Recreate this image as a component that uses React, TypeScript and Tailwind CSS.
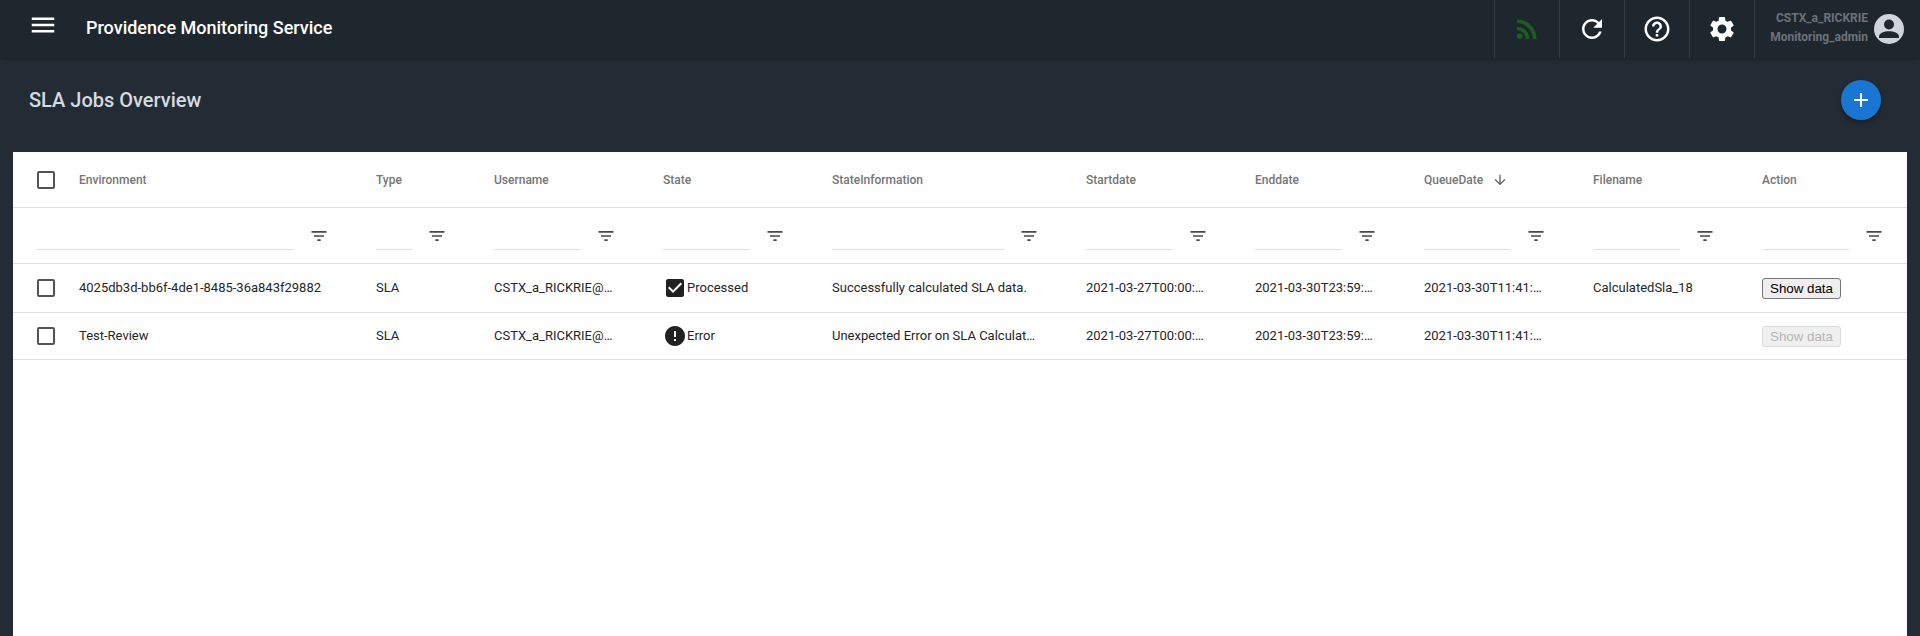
const font = { fontFamily: "Roboto, sans-serif" };

const rowGrid =
  "grid grid-cols-[66px_297px_118px_169px_169px_254px_169px_169px_169px_169px_1fr] items-center border-b border-[#e0e0e0]";

const columns = ["Environment", "Type", "Username", "State", "StateInformation", "Startdate", "Enddate", "QueueDate", "Filename", "Action"];

const filterWidths = ["w-[36px]", "w-[87px]", "w-[87px]", "w-[172px]", "w-[87px]", "w-[87px]", "w-[87px]", "w-[87px]", "w-[87px]"];

const rows = [
  {
    environment: "4025db3d-bb6f-4de1-8485-36a843f29882",
    state: "Processed",
    info: "Successfully calculated SLA data.",
    start: "2021-03-27T00:00:00Z",
    end: "2021-03-30T23:59:59Z",
    queue: "2021-03-30T11:41:20Z",
    file: "CalculatedSla_18",
    height: "h-[49px]",
  },
  {
    environment: "Test-Review",
    state: "Error",
    info: "Unexpected Error on SLA Calculation",
    start: "2021-03-27T00:00:00Z",
    end: "2021-03-30T23:59:59Z",
    queue: "2021-03-30T11:41:20Z",
    file: "",
    height: "h-[47px]",
  },
];

function Icon({ d, className }: { d: string; className: string }) {
  return (
    <svg viewBox="0 0 24 24" fill="currentColor" className={className}>
      <path d={d} />
    </svg>
  );
}

const paths = {
  menu: "M3 18h18v-2H3v2zm0-5h18v-2H3v2zm0-7v2h18V6H3z",
  filter: "M10 18h4v-2h-4v2zM3 6v2h18V6H3zm3 7h12v-2H6v2z",
  refresh:
    "M17.65 6.35C16.2 4.9 14.21 4 12 4c-4.42 0-7.99 3.58-7.99 8s3.57 8 7.99 8c3.73 0 6.84-2.55 7.73-6h-2.08c-.82 2.33-3.04 4-5.65 4-3.31 0-6-2.69-6-6s2.69-6 6-6c1.66 0 3.14.69 4.22 1.78L13 11h7V4l-2.35 2.35z",
  help:
    "M11 18h2v-2h-2v2zm1-16C6.48 2 2 6.48 2 12s4.48 10 10 10 10-4.48 10-10S17.52 2 12 2zm0 18c-4.41 0-8-3.59-8-8s3.59-8 8-8 8 3.59 8 8-3.59 8-8 8zm0-14c-2.21 0-4 1.79-4 4h2c0-1.1.9-2 2-2s2 .9 2 2c0 2-3 1.75-3 5h2c0-2.25 3-2.5 3-5 0-2.21-1.79-4-4-4z",
  settings:
    "M19.14 12.94c.04-.3.06-.61.06-.94 0-.32-.02-.64-.07-.94l2.03-1.58c.18-.14.23-.41.12-.61l-1.92-3.32c-.12-.22-.37-.29-.59-.22l-2.39.96c-.5-.38-1.03-.7-1.62-.94l-.36-2.54c-.04-.24-.24-.41-.48-.41h-3.84c-.24 0-.43.17-.47.41l-.36 2.54c-.59.24-1.13.57-1.62.94l-2.39-.96c-.22-.08-.47 0-.59.22L2.74 8.87c-.12.21-.08.47.12.61l2.03 1.58c-.05.3-.09.63-.09.94s.02.64.07.94l-2.03 1.58c-.18.14-.23.41-.12.61l1.92 3.32c.12.22.37.29.59.22l2.39-.96c.5.38 1.03.7 1.62.94l.36 2.54c.05.24.24.41.48.41h3.84c.24 0 .44-.17.47-.41l.36-2.54c.59-.24 1.13-.56 1.62-.94l2.39.96c.22.08.47 0 .59-.22l1.92-3.32c.12-.22.07-.47-.12-.61l-2.01-1.58zM12 15.6c-1.98 0-3.6-1.62-3.6-3.6s1.62-3.6 3.6-3.6 3.6 1.62 3.6 3.6-1.62 3.6-3.6 3.6z",
  rss:
    "M8.36 17.82a2.18 2.18 0 1 1-4.36 0 2.18 2.18 0 0 1 4.36 0zM4 4.44v2.83c7.03 0 12.73 5.7 12.73 12.73h2.83c0-8.59-6.97-15.56-15.56-15.56zm0 5.66v2.83c3.9 0 7.07 3.17 7.07 7.07h2.83c0-5.47-4.43-9.9-9.9-9.9z",
  add: "M19 13h-6v6h-2v-6H5v-2h6V5h2v6h6v2z",
  arrowDown: "M20 12l-1.41-1.41L13 16.17V4h-2v12.17l-5.58-5.59L4 12l8 8 8-8z",
  checkbox: "M19 5v14H5V5h14m0-2H5c-1.1 0-2 .9-2 2v14c0 1.1.9 2 2 2h14c1.1 0 2-.9 2-2V5c0-1.1-.9-2-2-2z",
  checked:
    "M19 3H5c-1.11 0-2 .9-2 2v14c0 1.1.89 2 2 2h14c1.11 0 2-.9 2-2V5c0-1.1-.89-2-2-2zm-9 14l-5-5 1.41-1.41L10 14.17l7.59-7.59L19 8l-9 9z",
  error: "M12 2C6.48 2 2 6.48 2 12s4.48 10 10 10 10-4.48 10-10S17.52 2 12 2zm1 15h-2v-2h2v2zm0-4h-2V7h2v6z",
};

function Checkbox() {
  return (
    <div className="pl-[21px]">
      <Icon d={paths.checkbox} className="block w-6 h-6 text-[#545454]" />
    </div>
  );
}

function Header() {
  const actions = [
    { d: paths.rss, color: "text-[#1b5e20]" },
    { d: paths.refresh, color: "text-white" },
    { d: paths.help, color: "text-white" },
    { d: paths.settings, color: "text-white" },
  ];

  return (
    <header className="relative z-10 flex h-[58px] items-center bg-[#1f272e] shadow-[0_1px_5px_rgba(0,0,0,0.25)]">
      <Icon d={paths.menu} className="ml-[28px] mb-[8px] w-[30px] h-[30px] text-white" />
      <h1 className="ml-[28px] mb-[4px] text-[18px] font-medium text-white">Providence Monitoring Service</h1>
      <div className="ml-auto flex h-full">
        {actions.map((a, i) => (
          <div key={i} className="flex w-[65px] items-center justify-center border-l border-white/10">
            <Icon d={a.d} className={`w-[30px] h-[30px] ${a.color}`} />
          </div>
        ))}
        <div className="flex w-[166px] items-center justify-end border-l border-white/10 pr-4">
          <div className="mb-[2px] text-right text-[12px] font-bold leading-[19px] text-[#6c7278]">
            <div>CSTX_a_RICKRIE</div>
            <div>Monitoring_admin</div>
          </div>
          <svg viewBox="0 0 30 30" className="ml-[6px] w-[30px] h-[30px]">
            <circle cx="15" cy="15" r="15" fill="#d0d5d9" />
            <circle cx="15" cy="10.5" r="5" fill="#1f272e" />
            <path d="M5 22.5c0-3.5 5.5-5.2 10-5.2s10 1.7 10 5.2V24H5z" fill="#1f272e" />
          </svg>
        </div>
      </div>
    </header>
  );
}

function Table() {
  return (
    <div className="mx-[13px] flex-1 bg-white">
      <div className={`${rowGrid} h-[56px]`}>
        <Checkbox />
        {columns.map((c) => (
          <div key={c} className="flex items-center text-[12px] font-medium text-[#757575]">
            {c}
            {c === "QueueDate" && <Icon d={paths.arrowDown} className="ml-[9px] w-4 h-4 text-[#616161]" />}
          </div>
        ))}
      </div>

      <div className={`${rowGrid} h-[56px]`}>
        <div className="col-span-2 flex items-center gap-[15px] pl-[24px]">
          <input className="h-[28px] w-[257px] border-b border-[#e0e0e0] outline-none" />
          <Icon d={paths.filter} className="w-5 h-5 text-[#484848]" />
        </div>
        {filterWidths.map((w, i) => (
          <div key={i} className="flex items-center gap-[15px]">
            <input className={`h-[28px] ${w} border-b border-[#e0e0e0] outline-none`} />
            <Icon d={paths.filter} className="w-5 h-5 text-[#484848]" />
          </div>
        ))}
      </div>

      {rows.map((r) => (
        <div key={r.environment} className={`${rowGrid} ${r.height} text-[13px] text-[#262626]`}>
          <Checkbox />
          <div>{r.environment}</div>
          <div>SLA</div>
          <div className="w-[119px] truncate">CSTX_a_RICKRIE@providence.org</div>
          <div className="flex items-center">
            <Icon
              d={r.state === "Error" ? paths.error : paths.checked}
              className="w-6 h-6 text-[#212121]"
            />
            <span>{r.state}</span>
          </div>
          <div className="w-[204px] truncate">{r.info}</div>
          <div className="w-[118px] truncate">{r.start}</div>
          <div className="w-[118px] truncate">{r.end}</div>
          <div className="w-[118px] truncate">{r.queue}</div>
          <div>{r.file}</div>
          <div className="flex items-center font-['Liberation_Sans',sans-serif]">
            {r.file ? (
              <button className="h-[21px] w-[79px] rounded-[3px] border border-[#767676] bg-[#efefef] text-[13.33px] text-black">
                Show data
              </button>
            ) : (
              <button
                disabled
                className="h-[21px] w-[79px] rounded-[3px] border border-[#dcdcdc] bg-[#efefef] text-[13.33px] text-[#b5b5b5]"
              >
                Show data
              </button>
            )}
          </div>
        </div>
      ))}
    </div>
  );
}

export default function App() {
  return (
    <div style={font} className="flex h-[636px] flex-col overflow-hidden bg-[#232c34]">
      <Header />
      <div className="flex h-[94px] shrink-0 items-center justify-between pb-[10px] pl-[29px] pr-[39px]">
        <h2 className="text-[20px] font-medium text-[#d5dbe0]">SLA Jobs Overview</h2>
        <button className="flex h-10 w-10 items-center justify-center rounded-full bg-[#1976d2] text-white shadow-[0_3px_5px_rgba(0,0,0,0.3)]">
          <Icon d={paths.add} className="w-6 h-6" />
        </button>
      </div>
      <Table />
    </div>
  );
}
